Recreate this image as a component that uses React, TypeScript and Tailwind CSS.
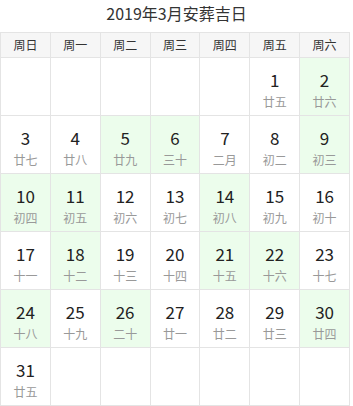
const weekdays = ["周日", "周一", "周二", "周三", "周四", "周五", "周六"];

const lunar = [
  "廿五", "廿六", "廿七", "廿八", "廿九", "三十", "二月", "初二", "初三", "初四",
  "初五", "初六", "初七", "初八", "初九", "初十", "十一", "十二", "十三", "十四",
  "十五", "十六", "十七", "十八", "十九", "二十", "廿一", "廿二", "廿三", "廿四", "廿五",
];

// auspicious days highlighted in green
const goodDays = new Set([2, 5, 6, 9, 10, 11, 14, 18, 21, 22, 24, 26, 30]);

type Cell = { day: number; lunar: string } | null;

const cells: Cell[] = [];
for (let i = 0; i < 5; i++) cells.push(null);
for (let d = 1; d <= 31; d++) cells.push({ day: d, lunar: lunar[d - 1] });
while (cells.length < 42) cells.push(null);

export default function App() {
  return (
    <div
      className="w-[353px] h-[406px] bg-white overflow-hidden"
      style={{ fontFamily: '"Microsoft YaHei", "Noto Sans CJK SC", "Noto Sans", sans-serif' }}
    >
      <div className="h-[32px] pt-[3px] text-center text-[16px] leading-[20px] text-[#333]">
        2019年3月安葬吉日
      </div>
      <div className="w-[350px] border-l border-t border-[#e4e4e4] grid grid-cols-7">
        {weekdays.map((w) => (
          <div
            key={w}
            className="h-[25px] border-r border-b border-[#e4e4e4] bg-[#f6f6f6] flex items-center justify-center text-[12px] text-[#333]"
          >
            {w}
          </div>
        ))}
        {cells.map((c, i) => (
          <div
            key={i}
            className={
              "h-[58px] border-r border-b border-[#e4e4e4] flex flex-col items-center " +
              (c && goodDays.has(c.day) ? "bg-[#ecfdec]" : "bg-white")
            }
          >
            {c && (
              <>
                <div className="mt-[10px] text-[17px] leading-[24px] text-[#222]">{c.day}</div>
                <div className="text-[12px] leading-[20px] text-[#999]">{c.lunar}</div>
              </>
            )}
          </div>
        ))}
      </div>
    </div>
  );
}
